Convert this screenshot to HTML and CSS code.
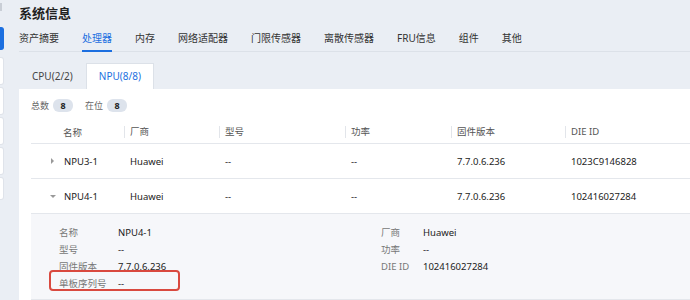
FILE: index.html
```html
<!DOCTYPE html>
<html>
<head>
    <meta charset="utf-8">
    <title>系统信息</title>
    <link rel="stylesheet" href="styles.css">
</head>
<body>
    <div class="sidebar">
        <div class="side-top"></div>
        <div class="side-item active"></div>
        <div class="side-item"></div>
        <div class="side-item"></div>
        <div class="side-item"></div>
        <div class="side-item"></div>
        <div class="side-item short"></div>
    </div>

    <div class="main">
        <div class="title">系统信息</div>

        <div class="tabs">
            <span class="tab">资产摘要</span>
            <span class="tab active">处理器</span>
            <span class="tab">内存</span>
            <span class="tab">网络适配器</span>
            <span class="tab">门限传感器</span>
            <span class="tab">离散传感器</span>
            <span class="tab">FRU信息</span>
            <span class="tab">组件</span>
            <span class="tab">其他</span>
        </div>

        <div class="subtabs">
            <span class="subtab">CPU(2/2)</span>
            <span class="subtab active">NPU(8/8)</span>
        </div>

        <div class="panel">
            <div class="summary">
                <span class="sum-label">总数</span><span class="pill">8</span>
                <span class="sum-label">在位</span><span class="pill">8</span>
            </div>

            <div class="grid head">
                <div></div>
                <div class="cell">名称</div>
                <div class="cell sep">厂商</div>
                <div class="cell sep">型号</div>
                <div class="cell sep">功率</div>
                <div class="cell sep">固件版本</div>
                <div class="cell sep">DIE ID</div>
            </div>

            <div class="grid row">
                <div class="expander"><span class="arrow-right"></span></div>
                <div class="cell">NPU3-1</div>
                <div class="cell">Huawei</div>
                <div class="cell">--</div>
                <div class="cell">--</div>
                <div class="cell">7.7.0.6.236</div>
                <div class="cell">1023C9146828</div>
            </div>

            <div class="grid row">
                <div class="expander"><span class="arrow-down"></span></div>
                <div class="cell">NPU4-1</div>
                <div class="cell">Huawei</div>
                <div class="cell">--</div>
                <div class="cell">--</div>
                <div class="cell">7.7.0.6.236</div>
                <div class="cell">102416027284</div>
            </div>

            <div class="detail">
                <div class="detail-col left">
                    <div class="kv"><span class="k">名称</span><span class="v">NPU4-1</span></div>
                    <div class="kv"><span class="k">型号</span><span class="v">--</span></div>
                    <div class="kv"><span class="k">固件版本</span><span class="v">7.7.0.6.236</span></div>
                    <div class="kv marked"><span class="k">单板序列号</span><span class="v">--</span></div>
                </div>
                <div class="detail-col right">
                    <div class="kv"><span class="k">厂商</span><span class="v">Huawei</span></div>
                    <div class="kv"><span class="k">功率</span><span class="v">--</span></div>
                    <div class="kv"><span class="k">DIE ID</span><span class="v">102416027284</span></div>
                </div>
            </div>
        </div>
    </div>
</body>
</html>
```

FILE: styles.css
```css
html,
body {
    overflow: hidden;
    width: 100%;
    height: 100%;
    margin: 0;
    padding: 0;
}

body {
    display: flex;
    background-color: #eaeef4;
    font-family: "Noto Sans", "Noto Sans CJK SC", sans-serif;
    color: #333;
}

/* cut-off navigation on the left */
.sidebar {
    width: 4px;
    flex-shrink: 0;
    display: flex;
    flex-direction: column;
    gap: 2px;
}

.side-top {
    height: 8px;
    margin-top: 3px;
    width: 2px;
    background-color: #c9ced6;
    margin-bottom: 14px;
}

.side-item {
    height: 26px;
    background-color: #fff;
    border: 1px solid #dfe3ea;
    border-left: none;
    border-radius: 0 3px 3px 0;
}

.side-item.active {
    height: 21px;
    background-color: #1c6fe0;
    border-color: #1c6fe0;
    margin-bottom: 5px;
}

.side-item.short {
    height: 21px;
}

.main {
    flex: 1;
    display: flex;
    flex-direction: column;
    padding: 4px 0 0 15px;
    min-width: 0;
}

.title {
    font-size: 13px;
    font-weight: bold;
    line-height: 18px;
    color: #222;
}

.tabs {
    display: flex;
    gap: 23px;
    margin-top: 6px;
    border-bottom: 1px solid #dce1e8;
}

.tab {
    font-size: 10px;
    line-height: 20px;
    padding-bottom: 2px;
    color: #333;
    border-bottom: 2px solid transparent;
    margin-bottom: -1px;
}

.tab.active {
    color: #1c6fe0;
    border-bottom-color: #1c6fe0;
}

.subtabs {
    display: flex;
    margin-top: 11px;
}

.subtab {
    font-size: 10px;
    line-height: 25px;
    padding: 0 12px;
    color: #444;
    border: 1px solid transparent;
    border-bottom: none;
}

.subtab.active {
    background-color: #fff;
    color: #1c6fe0;
    border-color: #dce1e8;
}

.panel {
    flex: 1;
    min-height: 0;
    overflow: hidden;
    background-color: #fff;
    padding: 10px 0 0 12px;
}

.summary {
    display: flex;
    align-items: center;
    font-size: 9px;
    line-height: 13px;
}

.sum-label {
    color: #666;
    margin-right: 4px;
}

.pill {
    background-color: #dde3ec;
    border-radius: 6px;
    width: 20px;
    text-align: center;
    font-weight: bold;
    color: #222;
    margin-right: 12px;
}

.grid {
    display: grid;
    grid-template-columns: 27px 66px 95px 126px 106px 114px 1fr;
    align-items: center;
    font-size: 9.5px;
    border-bottom: 1px solid #e4e7ec;
}

.head {
    margin-top: 8px;
    height: 23px;
    color: #555;
}

.row {
    height: 34px;
    color: #222;
}

.cell {
    padding-left: 6px;
    white-space: nowrap;
}

.head .cell {
    padding-left: 5px;
}

.head .sep {
    border-left: 1px solid #e2e5ea;
    line-height: 12px;
}

.expander {
    padding-left: 20px;
    display: flex;
    align-items: center;
}

.arrow-right {
    width: 0;
    height: 0;
    border-top: 3px solid transparent;
    border-bottom: 3px solid transparent;
    border-left: 3px solid #999;
}

.arrow-down {
    width: 0;
    height: 0;
    margin-left: -1px;
    border-left: 3px solid transparent;
    border-right: 3px solid transparent;
    border-top: 3px solid #999;
}

.detail {
    display: flex;
    background-color: #f6f7fa;
    padding: 10px 0 7px 28px;
    border-bottom: 1px solid #e4e7ec;
    font-size: 9.5px;
}

.detail-col.left {
    width: 322px;
}

.kv {
    display: flex;
    line-height: 17px;
    position: relative;
}

.left .k {
    width: 59px;
}

.right .k {
    width: 42px;
}

.k {
    color: #777;
}

.v {
    color: #222;
}

.marked::after {
    content: "";
    position: absolute;
    left: -10px;
    top: -5px;
    width: 127px;
    height: 17px;
    border: 2px solid #d9493f;
    border-radius: 4px;
}
```
